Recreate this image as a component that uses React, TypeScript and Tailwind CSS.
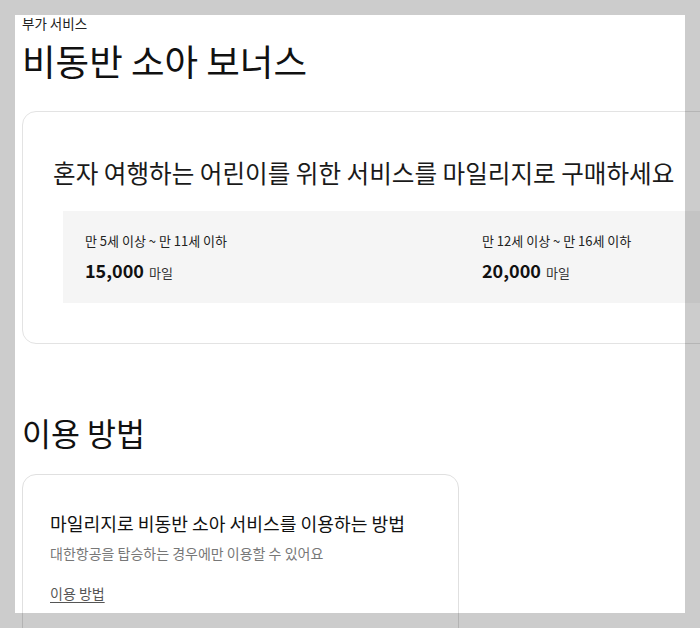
const prices = [
  { age: "만 5세 이상 ~ 만 11세 이하", miles: "15,000" },
  { age: "만 12세 이상 ~ 만 16세 이하", miles: "20,000" },
];

const App = () => {
  return (
    <div className="relative w-[700px] h-[628px] overflow-hidden bg-white text-[#111] font-['Noto_Sans_CJK_KR','Noto_Sans',sans-serif]">
      <div className="pl-[22px] pt-[17px]">
        <p className="text-[13.5px] leading-none text-[#222]">부가 서비스</p>
        <h1 className="mt-[12px] text-[36.5px] leading-none">비동반 소아 보너스</h1>

        <section className="mt-[32px] w-[760px] rounded-[14px] border border-[#e3e3e3] pt-[48px] pb-[40px]">
          <h2 className="pl-[30px] text-[24.6px] leading-none text-[#1a1a1a]">
            혼자 여행하는 어린이를 위한 서비스를 마일리지로 구매하세요
          </h2>
          <div className="mt-[26px] ml-[40px] flex bg-[#f5f5f5] pl-[22px] pt-[23px] pb-[24px]">
            {prices.map((p) => (
              <div key={p.miles} className="w-[397px] shrink-0 flex flex-col">
                <span className="text-[13px] leading-none text-[#222]">{p.age}</span>
                <span className="mt-[14px] flex items-baseline gap-x-[5px] leading-none">
                  <strong className="text-[18px] font-bold">{p.miles}</strong>
                  <span className="text-[13px] text-[#333]">마일</span>
                </span>
              </div>
            ))}
          </div>
        </section>

        <h2 className="mt-[73px] text-[31.5px] leading-none">이용 방법</h2>

        <section className="mt-[26px] w-[437px] h-[200px] rounded-[14px] border border-[#e0e0e0] pl-[27px] pt-[39px]">
          <h3 className="text-[18.2px] leading-none text-[#111]">
            마일리지로 비동반 소아 서비스를 이용하는 방법
          </h3>
          <p className="mt-[14px] text-[14px] leading-none text-[#777]">
            대한항공을 탑승하는 경우에만 이용할 수 있어요
          </p>
          <a href="#" className="mt-[26px] inline-block text-[14px] leading-none text-[#555] underline underline-offset-[3px]">
            이용 방법
          </a>
        </section>
      </div>

      {/* grey frame laid over the capture */}
      <div className="absolute left-0 top-0 w-[700px] h-[15px] bg-black/20" />
      <div className="absolute left-0 top-[613px] w-[700px] h-[15px] bg-black/20" />
      <div className="absolute left-0 top-[15px] w-[15px] h-[598px] bg-black/20" />
      <div className="absolute left-[685px] top-[15px] w-[15px] h-[598px] bg-black/20" />
    </div>
  );
};

export default App;
